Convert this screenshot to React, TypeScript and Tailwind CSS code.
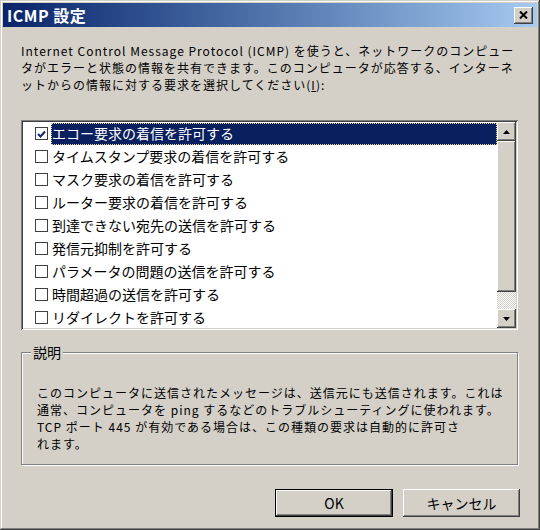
import React from "react";

const items = [
  "エコー要求の着信を許可する",
  "タイムスタンプ要求の着信を許可する",
  "マスク要求の着信を許可する",
  "ルーター要求の着信を許可する",
  "到達できない宛先の送信を許可する",
  "発信元抑制を許可する",
  "パラメータの問題の送信を許可する",
  "時間超過の送信を許可する",
  "リダイレクトを許可する",
];

const raised =
  "shadow-[inset_-1px_-1px_#404040,inset_1px_1px_#ffffff,inset_-2px_-2px_#808080,inset_2px_2px_#d4d0c8]";

function Arrow({ down }: { down?: boolean }) {
  return (
    <svg width="7" height="4" viewBox="0 0 7 4">
      <polygon points={down ? "0,0 7,0 3.5,4" : "0,4 7,4 3.5,0"} fill="#000" />
    </svg>
  );
}

export default function App() {
  return (
    <div
      className={
        "w-[540px] h-[530px] bg-[#d4d0c8] p-[3px] flex flex-col text-black font-['Noto_Sans_CJK_JP',sans-serif] " +
        "shadow-[inset_-1px_-1px_#404040,inset_1px_1px_#d4d0c8,inset_-2px_-2px_#808080,inset_2px_2px_#ffffff]"
      }
    >
      {/* title bar */}
      <div className="h-[24px] flex items-center justify-between pl-[4px] pr-[4px] bg-linear-to-r from-[#0a246a] to-[#a6caf0]">
        <span className="text-white font-bold text-[16px] leading-none tracking-[0.5px]">ICMP 設定</span>
        <div className={"w-[19px] h-[17px] bg-[#d4d0c8] flex items-center justify-center " + raised}>
          <svg width="9" height="8" viewBox="0 0 9 8">
            <path d="M1 0.5 L8 7.5 M8 0.5 L1 7.5" stroke="#000" strokeWidth="2" />
          </svg>
        </div>
      </div>

      <div className="flex-1 flex flex-col pl-[18px] pr-[19px]">
        <p className="mt-[15px] text-[12px] tracking-[1px] leading-[17px] whitespace-nowrap">
          Internet Control Message Protocol (ICMP) を使うと、ネットワークのコンピュー
          <br />
          タがエラーと状態の情報を共有できます。このコンピュータが応答する、インターネ
          <br />
          ットからの情報に対する要求を選択してください(<span className="underline">I</span>):
        </p>

        {/* list box */}
        <div className="mt-[27px] h-[210px] p-[2px] flex bg-white shadow-[inset_1px_1px_#808080,inset_-1px_-1px_#ffffff,inset_2px_2px_#404040,inset_-2px_-2px_#d4d0c8]">
          <div className="flex-1 overflow-hidden">
            {items.map((t, i) => (
              <div key={t} className="h-[23px] flex items-center pl-[12px] text-[14px]">
                <div className="w-[13px] h-[13px] mr-[3px] bg-white border border-[#404040] flex items-center justify-center">
                  {i === 0 && (
                    <svg width="9" height="8" viewBox="0 0 9 8">
                      <path d="M1 4 L3.5 6.5 L8 1.5" stroke="#10247a" strokeWidth="2" fill="none" />
                    </svg>
                  )}
                </div>
                <span
                  className={
                    "flex-1 h-[22px] flex items-center whitespace-nowrap " +
                    (i === 0 ? "bg-[#0a1f5e] text-white border border-dotted border-[#e8d89a]" : "border border-transparent")
                  }
                >
                  {t}
                </span>
              </div>
            ))}
          </div>
          {/* scrollbar */}
          <div className="w-[19px] flex flex-col">
            <div className={"h-[19px] bg-[#d4d0c8] flex items-center justify-center " + raised}>
              <Arrow />
            </div>
            <div className={"h-[151px] bg-[#d4d0c8] " + raised} />
            <div className="flex-1 bg-[repeating-conic-gradient(#d4d0c8_0_25%,#ffffff_0_50%)] bg-[length:2px_2px]" />
            <div className={"h-[19px] bg-[#d4d0c8] flex items-center justify-center " + raised}>
              <Arrow down />
            </div>
          </div>
        </div>

        {/* description group */}
        <div className="mt-[22px] relative h-[113px] border border-[#808080] shadow-[inset_1px_1px_#ffffff,1px_1px_#ffffff]">
          <span className="absolute -top-[10px] left-[9px] px-[2px] bg-[#d4d0c8] text-[14px] leading-[18px]">説明</span>
          <p className="pt-[31px] pl-[15px] text-[12px] tracking-[1px] leading-[17px] whitespace-nowrap">
            このコンピュータに送信されたメッセージは、送信元にも送信されます。これは
            <br />
            通常、コンピュータを ping するなどのトラブルシューティングに使われます。
            <br />
            TCP ポート 445 が有効である場合は、この種類の要求は自動的に許可さ
            <br />
            れます。
          </p>
        </div>

        <div className="mt-[24px] flex justify-end gap-[10px] -mr-[2px]">
          <button className={"w-[118px] h-[28px] bg-[#d4d0c8] border border-black text-[14px] " + raised}>OK</button>
          <button className={"w-[117px] h-[28px] bg-[#d4d0c8] text-[14px] " + raised}>キャンセル</button>
        </div>
      </div>
    </div>
  );
}
